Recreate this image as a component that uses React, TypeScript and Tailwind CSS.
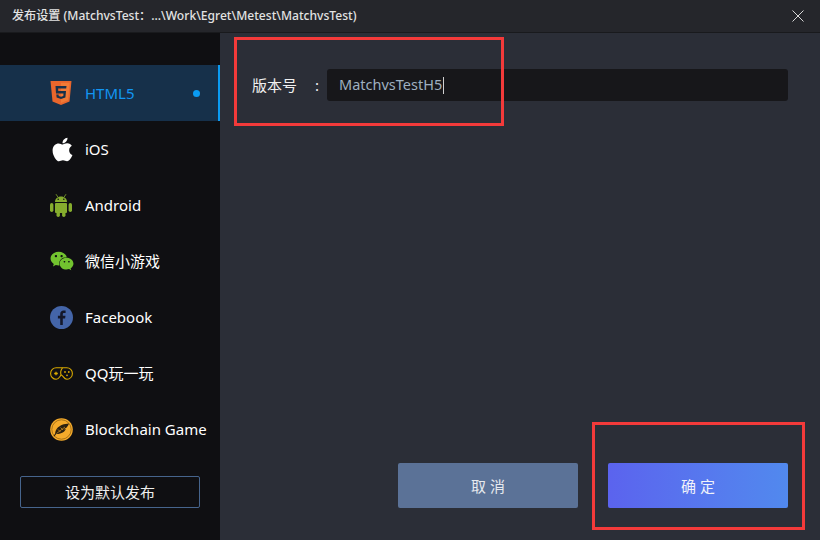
import type { ReactNode } from 'react';
import { FaApple, FaWeixin } from 'react-icons/fa';

const Html5Icon = () => (
  <svg width="22" height="24" viewBox="0 0 22 24">
    <path d="M.5 0h21l-2 20.500L11 24l-8.500-3.500z" fill="#e9662c" />
    <path d="M11 1.800h8.700l-1.600 17.400L11 22z" fill="#f07a36" />
    <path d="M5.500 5h11l-.3 2.400H8.100l.2 2.700h7.700l-.6 6.500-4.400 1.500-4.400-1.500-.3-3h2.300l.1 1.400 2.300.8 2.300-.8.200-2.600H6z" fill="#16304a" />
  </svg>
);

const AndroidIcon = () => (
  <svg width="22" height="23" viewBox="0 0 22 23" fill="#86ad2e">
    <rect x="5" y="9" width="12" height="10" rx="1" />
    <rect x="0" y="9" width="3.400" height="9" rx="1.700" />
    <rect x="18.600" y="9" width="3.400" height="9" rx="1.700" />
    <rect x="6.500" y="16" width="3.400" height="7" rx="1.700" />
    <rect x="12.100" y="16" width="3.400" height="7" rx="1.700" />
    <path d="M5 8c0-3.200 2.600-5.500 6-5.500S17 4.800 17 8z" />
    <path d="M6 .2l2 3M16 .2l-2 3" stroke="#86ad2e" strokeWidth=".8" />
    <circle cx="8.200" cy="5.300" r=".8" fill="#0f0f12" />
    <circle cx="13.800" cy="5.300" r=".8" fill="#0f0f12" />
  </svg>
);

const FacebookIcon = () => (
  <svg width="23" height="23" viewBox="0 0 23 23">
    <circle cx="11.500" cy="11.500" r="11.500" fill="#4465a8" />
    <path d="M12.800 19v-6.600h2.300l.4-2.700h-2.700V8.200c0-.8.300-1.300 1.400-1.300h1.400V4.500c-.3 0-1.100-.1-2-.1-2 0-3.400 1.200-3.400 3.500v1.800H7.900v2.700h2.300V19z" fill="#14182a" />
  </svg>
);

const GamepadIcon = () => (
  <svg width="23" height="13" viewBox="0 0 23 13" fill="none" stroke="#d8a900" strokeWidth="1.100">
    <path d="M6.200.8h10.600c3 0 5.600 2.400 5.600 5.600s-2.400 5.800-5.400 5.800c-3.400 0-3.400-3.400-5.700-4.300-1.400 1-2.200 4.300-5.100 4.300C3 12.200.6 9.600.6 6.400S3.200.8 6.200.8z" />
    <path d="M11 7.900c-.7-2.600-.2-5 1.500-7" />
    <path d="M4.200 6.500h3.600M6 4.700v3.600" strokeWidth="1.300" />
    <circle cx="15" cy="5" r=".9" fill="#d8a900" stroke="none" />
    <circle cx="18.800" cy="5" r=".9" fill="#d8a900" stroke="none" />
    <circle cx="17" cy="8.300" r=".9" fill="#d8a900" stroke="none" />
  </svg>
);

const BlockchainIcon = () => (
  <svg width="23" height="23" viewBox="0 0 23 23" fill="none">
    <circle cx="11.500" cy="11.500" r="11.300" fill="#f5ab2b" />
    <circle cx="11.500" cy="11.500" r="9.700" stroke="#8a5c10" strokeWidth=".7" />
    <path d="M19 5.500c-4.500.2-9.500 1.800-12 5-1.300 1.700-1.800 3.500-1.800 5l-1.700 2.500.8.500 2-2.500c2.400-.1 5.500-.6 7.700-2.300 1-.8 1.500-1.700 1.800-2.600l-2.600.3 3.200-1.600C17.500 8.500 18.500 7 19 5.500z" fill="#2c2110" />
    <path d="M6.500 15.500 15 9M8 11.500l2.500 2.500M10.500 9.500l2.500 2.500" stroke="#f5ab2b" strokeWidth=".6" />
  </svg>
);

type Platform = { name: string; icon: ReactNode; active?: boolean };

const platforms: Platform[] = [
  { name: 'HTML5', icon: <Html5Icon />, active: true },
  { name: 'iOS', icon: <FaApple size={27} color="#ffffff" className="-ml-px" /> },
  { name: 'Android', icon: <AndroidIcon /> },
  { name: '微信小游戏', icon: <FaWeixin size={24} color="#72c32f" /> },
  { name: 'Facebook', icon: <FacebookIcon /> },
  { name: 'QQ玩一玩', icon: <GamepadIcon /> },
  { name: 'Blockchain Game', icon: <BlockchainIcon /> },
];

export default function App() {
  return (
    <div className="relative flex h-[540px] w-[820px] flex-col overflow-hidden bg-[#2b2e37] font-['Noto_Sans','Noto_Sans_CJK_SC',sans-serif] text-white">
      {/* title bar */}
      <header className="flex h-[33px] shrink-0 items-center justify-between border-b border-[#191a1d] bg-[#25262b] pl-3 pr-4">
        <span className="text-[12.100px] font-medium text-[#e2e2e2]">
          发布设置 (MatchvsTest：...\Work\Egret\Metest\MatchvsTest)
        </span>
        <svg width="12" height="12" viewBox="0 0 12 12" stroke="#d8d8d8" strokeWidth="1">
          <path d="M.5.5l11 11M11.500.5l-11 11" />
        </svg>
      </header>

      <div className="flex min-h-0 flex-1">
        {/* sidebar */}
        <aside className="flex w-[220px] shrink-0 flex-col bg-[#0f0f12] pt-8">
          <nav className="flex flex-col">
            {platforms.map((p) => (
              <div
                key={p.name}
                className={
                  p.active
                    ? 'flex h-14 items-center border-r-2 border-[#0a9bf2] bg-[#16304a] pl-[50px] pr-[18px]'
                    : 'flex h-14 items-center pl-[50px]'
                }
              >
                <span className="flex w-[35px] shrink-0 items-center">{p.icon}</span>
                <span
                  className={
                    p.active
                      ? 'flex-1 text-[15px] text-[#1296f3]'
                      : 'whitespace-nowrap text-[15px] text-white'
                  }
                >
                  {p.name}
                </span>
                {p.active && <span className="h-[7px] w-[7px] rounded-full bg-[#0a9bf2]" />}
              </div>
            ))}
          </nav>
          <button className="mx-5 mt-[19px] flex h-8 items-center justify-center rounded-[2px] border border-[#46648c] text-[15px] text-[#eeeeee]">
            设为默认发布
          </button>
        </aside>

        {/* form */}
        <main className="flex flex-1 flex-col justify-between pb-8 pl-8 pr-8 pt-9">
          <div className="flex items-center">
            <label className="w-[63px] text-[15px] text-[#f0f0f0]">版本号</label>
            <span className="w-3 text-[15px] text-[#f0f0f0]">:</span>
            <div className="flex h-8 flex-1 items-center rounded-[3px] bg-[#17171a] pl-3 text-[14.500px] text-[#9fb0c0]">
              MatchvsTestH5
              <span className="ml-px h-[17px] w-px bg-[#d0d0d0]" />
            </div>
          </div>
          <div className="flex justify-end gap-[30px]">
            <button className="h-[45px] w-[180px] rounded-[2px] bg-[#5b7297] pl-1 pt-px text-[15px] tracking-[4px] text-[#e6e9ee]">
              取消
            </button>
            <button className="h-[45px] w-[180px] rounded-[2px] bg-gradient-to-r from-[#5b63ee] to-[#5189ee] pl-1 pt-px text-[15px] tracking-[4px] text-[#f0f2fa]">
              确定
            </button>
          </div>
        </main>
      </div>

      {/* red annotation boxes drawn over the shot */}
      <div className="absolute left-[234px] top-[37px] h-[89px] w-[270px] border-[3px] border-[#f33a3a]" />
      <div className="absolute left-[592px] top-[422px] h-[108px] w-[213px] border-[3px] border-[#f33a3a]" />
    </div>
  );
}
